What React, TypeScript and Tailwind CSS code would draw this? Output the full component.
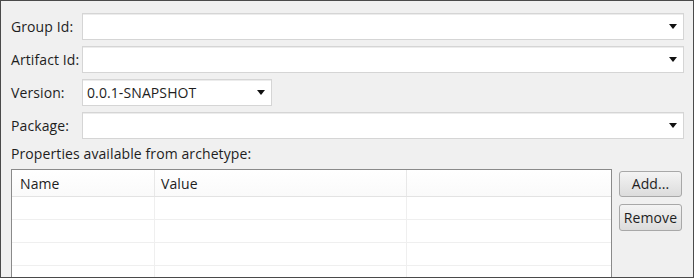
const font = { fontFamily: '"Open Sans", "Noto Sans", sans-serif' };

const Arrow = () => (
  <svg width="8" height="5" viewBox="0 0 8 5" className="shrink-0">
    <path d="M0 0 H8 L4 5 Z" fill="#111" />
  </svg>
);

type ComboProps = { value?: string; wide?: boolean };

const Combo = ({ value = '', wide = true }: ComboProps) => (
  <div
    className={`flex items-center h-[27px] bg-white border border-[#d5d5d5] shadow-[inset_0_1px_0_#ececec] pl-[4px] pr-[6px] ${
      wide ? 'w-full' : 'w-[190px]'
    }`}
  >
    <span className="flex-1 text-[14px] tracking-[0.1px] text-[#1e1e1e] leading-none">{value}</span>
    <Arrow />
  </div>
);

const fields = [
  { label: 'Group Id:', value: '', wide: true },
  { label: 'Artifact Id:', value: '', wide: true },
  { label: 'Version:', value: '0.0.1-SNAPSHOT', wide: false },
  { label: 'Package:', value: '', wide: true },
];

const App = () => {
  return (
    <div
      style={font}
      className="w-[694px] h-[278px] overflow-hidden bg-[#f0f0f0] border border-[#4a4a4a] text-[#1e1e1e] text-[14px] tracking-[0.1px]"
    >
      <div className="flex flex-col gap-[6px] pt-[12px] pl-[10px] pr-[9px]">
        {fields.map((f) => (
          <div key={f.label} className="grid grid-cols-[71px_1fr] items-center">
            <span className="leading-none">{f.label}</span>
            <Combo value={f.value} wide={f.wide} />
          </div>
        ))}
      </div>

      <div className="pl-[10px] pt-[8px] leading-none">Properties available from archetype:</div>

      <div className="flex gap-[7px] pl-[10px] pt-[8px]">
        {/* properties table */}
        <div className="w-[601px] h-[120px] bg-white border border-[#8a8a8a]">
          <div className="grid grid-cols-[143px_252px_1fr] h-[27px] border-b border-[#e3e3e3] bg-gradient-to-b from-white to-[#fafafa]">
            <div className="pl-[8px] flex items-center border-r border-[#e8e8e8]">Name</div>
            <div className="pl-[6px] flex items-center border-r border-[#e8e8e8]">Value</div>
            <div />
          </div>
          {[0, 1, 2, 3].map((i) => (
            <div key={i} className="grid grid-cols-[143px_252px_1fr] h-[23px] border-b border-[#efefef]">
              <div className="border-r border-[#efefef]" />
              <div className="border-r border-[#efefef]" />
              <div />
            </div>
          ))}
        </div>

        {/* buttons */}
        <div className="flex flex-col gap-[7px] pt-[2px]">
          <button className="w-[63px] h-[26px] rounded-[3px] border border-[#a8a8a8] bg-gradient-to-b from-[#f4f4f4] to-[#dcdcdc] leading-none">
            Add...
          </button>
          <button className="w-[63px] h-[27px] rounded-[3px] border border-[#a8a8a8] bg-gradient-to-b from-[#f4f4f4] to-[#dcdcdc] leading-none">
            Remove
          </button>
        </div>
      </div>
    </div>
  );
};

export default App;
